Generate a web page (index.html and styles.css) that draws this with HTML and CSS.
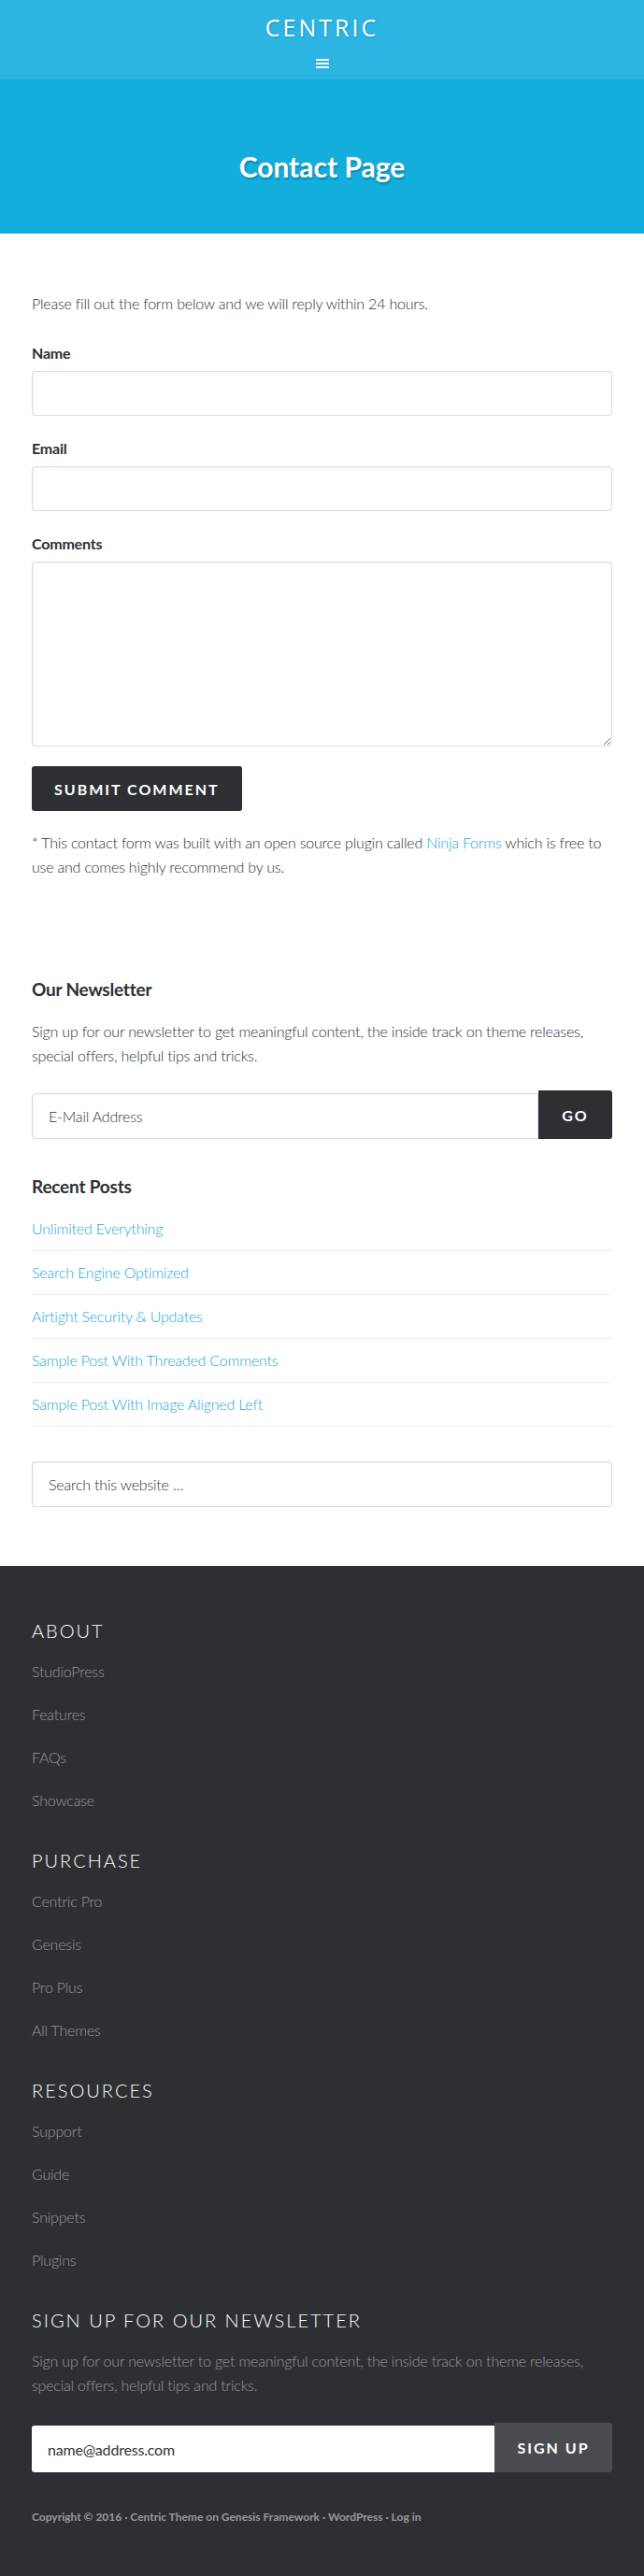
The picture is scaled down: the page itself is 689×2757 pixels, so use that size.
FILE: index.html
```html
<!DOCTYPE html>
<html lang="en">
  <head>
    <meta charset="UTF-8" />
    <title>Contact Page - Centric</title>
    <link rel="stylesheet" href="styles.css">
  </head>
  <body>
    <header class="site-header">
      <div class="site-title">Centric</div>
      <button class="menu-toggle" aria-label="Menu">
        <span></span><span></span><span></span>
      </button>
    </header>

    <div class="page-title">
      <h1>Contact Page</h1>
    </div>

    <main class="content">
      <p class="intro">Please fill out the form below and we will reply within 24 hours.</p>

      <form class="contact-form">
        <label for="name">Name</label>
        <input id="name" type="text" />

        <label for="email">Email</label>
        <input id="email" type="email" />

        <label for="comments">Comments</label>
        <textarea id="comments"></textarea>

        <button type="button" class="btn">Submit Comment</button>
      </form>

      <p class="note">* This contact form was built with an open source plugin called <a href="#">Ninja Forms</a> which is free to use and comes highly recommend by us.</p>

      <!-- sidebar widgets -->
      <section class="widget newsletter">
        <h3>Our Newsletter</h3>
        <p>Sign up for our newsletter to get meaningful content, the inside track on theme releases, special offers, helpful tips and tricks.</p>
        <div class="subscribe">
          <input type="text" placeholder="E-Mail Address" />
          <button type="button">Go</button>
        </div>
      </section>

      <section class="widget recent-posts">
        <h3>Recent Posts</h3>
        <ul>
          <li><a href="#">Unlimited Everything</a></li>
          <li><a href="#">Search Engine Optimized</a></li>
          <li><a href="#">Airtight Security &amp; Updates</a></li>
          <li><a href="#">Sample Post With Threaded Comments</a></li>
          <li><a href="#">Sample Post With Image Aligned Left</a></li>
        </ul>
      </section>

      <section class="widget search">
        <input type="search" placeholder="Search this website …" />
      </section>
    </main>

    <footer class="footer-widgets">
      <section class="fwidget">
        <h4>About</h4>
        <ul>
          <li><a href="#">StudioPress</a></li>
          <li><a href="#">Features</a></li>
          <li><a href="#">FAQs</a></li>
          <li><a href="#">Showcase</a></li>
        </ul>
      </section>
      <section class="fwidget">
        <h4>Purchase</h4>
        <ul>
          <li><a href="#">Centric Pro</a></li>
          <li><a href="#">Genesis</a></li>
          <li><a href="#">Pro Plus</a></li>
          <li><a href="#">All Themes</a></li>
        </ul>
      </section>
      <section class="fwidget">
        <h4>Resources</h4>
        <ul>
          <li><a href="#">Support</a></li>
          <li><a href="#">Guide</a></li>
          <li><a href="#">Snippets</a></li>
          <li><a href="#">Plugins</a></li>
        </ul>
      </section>
      <section class="fwidget">
        <h4>Sign up for our newsletter</h4>
        <p>Sign up for our newsletter to get meaningful content, the inside track on theme releases, special offers, helpful tips and tricks.</p>
        <div class="subscribe dark">
          <input type="text" placeholder="name@address.com" />
          <button type="button">Sign Up</button>
        </div>
      </section>
      <p class="copyright">Copyright © 2016 · Centric Theme on Genesis Framework · WordPress · Log in</p>
    </footer>
  </body>
</html>
```

FILE: styles.css
```css
body {
  margin: 0;
  background: #fff;
  color: #2e2f33;
  font-family: "Lato", "Liberation Sans", sans-serif;
  font-size: 16px;
  font-weight: 300;
  line-height: 26px;
  letter-spacing: -0.2px;
}

* {
  box-sizing: border-box;
}

a {
  color: #1ba8dc;
  text-decoration: none;
}

p,
h1,
h3,
h4,
ul {
  margin: 0;
  padding: 0;
}

ul {
  list-style: none;
}

/* header */
.site-header {
  height: 85px;
  background-color: #2cb5e2;
  padding-top: 14px;
  text-align: center;
}

.site-title {
  color: #fff;
  font-family: "Open Sans", "Lato", sans-serif;
  font-size: 25px;
  font-weight: 400;
  line-height: 30px;
  letter-spacing: 3px;
  text-transform: uppercase;
  text-shadow: 1px 1px 2px rgba(0, 0, 0, 0.2);
}

.menu-toggle {
  display: flex;
  flex-direction: column;
  justify-content: space-between;
  width: 14px;
  height: 10px;
  margin: 19px auto 0;
  padding: 0;
  border: 0;
  background: none;
}

.menu-toggle span {
  display: block;
  height: 2px;
  background: #fff;
}

/* hero */
.page-title {
  height: 165px;
  background-color: #14aedd;
  padding-top: 75px;
  text-align: center;
}

.page-title h1 {
  color: #fff;
  font-size: 30px;
  font-weight: 700;
  line-height: 36px;
  letter-spacing: 0;
  text-shadow: 1px 2px 2px rgba(0, 0, 0, 0.25);
}

/* content */
.content {
  padding: 62px 34px 63px;
}

.intro {
  margin-bottom: 27px;
}

.contact-form label {
  display: block;
  font-weight: 700;
  margin-bottom: 6px;
}

input,
textarea {
  display: block;
  width: 100%;
  height: 48px;
  padding: 0 17px;
  border: 1px solid #ddd;
  border-radius: 3px;
  background: #fff;
  color: #333;
  font-family: inherit;
  font-size: 16px;
  font-weight: 300;
  letter-spacing: -0.2px;
  box-shadow: inset 1px 1px 3px #f2f2f2;
  outline: none;
}

input::placeholder {
  color: #333;
}

.contact-form input {
  margin-bottom: 22px;
}

.contact-form textarea {
  height: 198px;
  resize: vertical;
  margin-bottom: 21px;
}

.btn {
  height: 48px;
  padding: 0 24px;
  border: 0;
  border-radius: 3px;
  background: #2e2f33;
  color: #fff;
  font-family: inherit;
  font-size: 16px;
  font-weight: 700;
  letter-spacing: 2px;
  text-transform: uppercase;
}

.note {
  margin-top: 21px;
}

.widget h3 {
  font-size: 19px;
  font-weight: 700;
  line-height: 24px;
  margin-bottom: 20px;
}

.newsletter {
  margin-top: 106px;
}

.subscribe {
  display: flex;
  align-items: flex-end;
  margin-top: 24px;
}

.subscribe input {
  flex: 1;
  height: 49px;
  border-radius: 3px 0 0 3px;
}

.subscribe button {
  width: 79px;
  height: 52px;
  border: 0;
  border-radius: 0 3px 3px 0;
  background: #2e2f33;
  color: #fff;
  font-family: inherit;
  font-size: 16px;
  font-weight: 700;
  letter-spacing: 2px;
  text-transform: uppercase;
}

.recent-posts {
  margin-top: 39px;
}

.recent-posts li {
  border-bottom: 1px solid #eee;
  padding-bottom: 10px;
  margin-bottom: 10px;
}

.search {
  margin-top: 37px;
}

.search input {
  height: 49px;
}

/* footer */
.footer-widgets {
  background-color: #2e2f33;
  color: #999;
  padding: 57px 34px 54px;
}

.fwidget {
  margin-bottom: 39px;
}

.fwidget h4 {
  color: #fff;
  font-size: 20px;
  font-weight: 300;
  line-height: 24px;
  letter-spacing: 2px;
  text-transform: uppercase;
  margin-bottom: 19px;
}

.fwidget li {
  margin-bottom: 20px;
}

.fwidget li:last-child {
  margin-bottom: 0;
}

.fwidget a {
  color: #999;
}

.subscribe.dark {
  margin-top: 27px;
}

.subscribe.dark input {
  height: 50px;
  border: 0;
  box-shadow: none;
  font-weight: 400;
}

.subscribe.dark button {
  width: 126px;
  height: 53px;
  background: #4a4b50;
}

.copyright {
  font-size: 12px;
  font-weight: 700;
  line-height: 20px;
  letter-spacing: 0;
  margin-top: -1px;
}
```
